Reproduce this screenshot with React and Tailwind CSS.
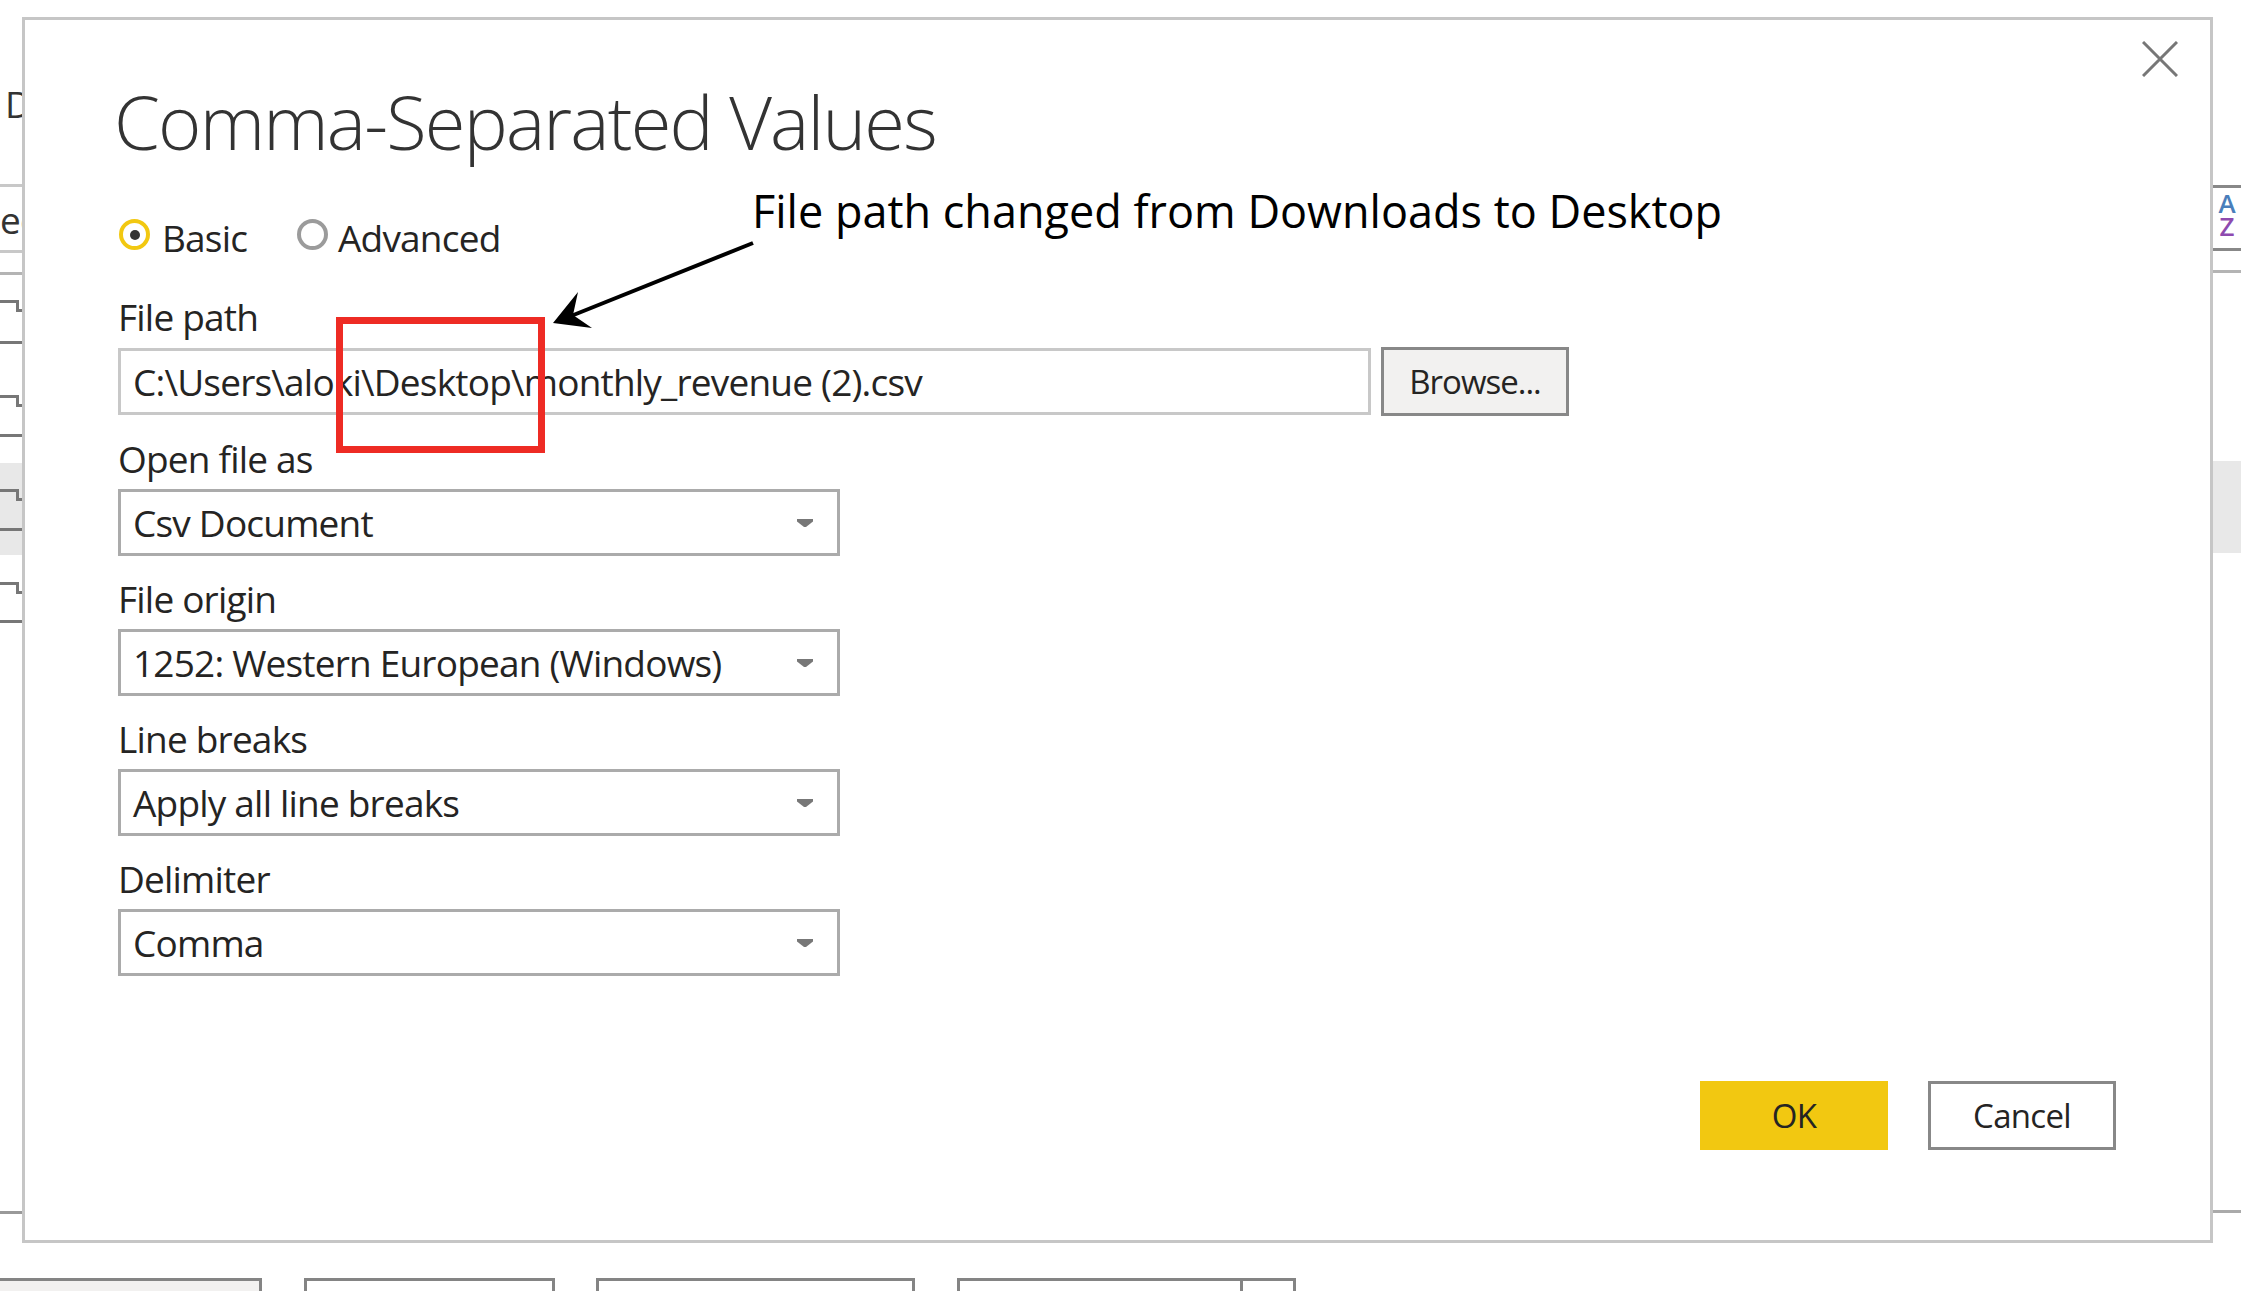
import React from 'react';

const Caret = () => (
  <svg width="16" height="8" viewBox="0 0 16 8" className="shrink-0">
    <path d="M0 0H16V2.5L9 8H7L0 2.5Z" fill="#777" />
  </svg>
);

const Radio = ({ checked }) =>
  checked ? (
    <span className="flex h-[31px] w-[31px] shrink-0 items-center justify-center rounded-full border-4 border-[#f2c811] bg-white">
      <span className="h-[10px] w-[10px] rounded-full bg-[#333]" />
    </span>
  ) : (
    <span className="h-[31px] w-[31px] shrink-0 rounded-full border-4 border-[#9b9b9b] bg-white" />
  );

const Label = ({ children, className = '' }) => (
  <div className={`whitespace-nowrap text-[37px] leading-none tracking-[-0.8px] text-[#252423] ${className}`}>
    {children}
  </div>
);

const Select = ({ value }) => (
  <div className="flex h-[67px] w-[722px] items-center justify-between border-[3px] border-[#ababab] bg-white pl-[12px] pr-[24px]">
    <span className="whitespace-nowrap text-[37px] leading-none tracking-[-0.8px] text-[#252423]">{value}</span>
    <Caret />
  </div>
);

const Field = ({ label, value }) => (
  <>
    <Label className="mt-[24px]">{label}</Label>
    <div className="mt-[12px]">
      <Select value={value} />
    </div>
  </>
);

const Bracket = () => (
  <svg width="22" height="12" viewBox="0 0 22 12" className="block">
    <path d="M0 1.5H17.5V10.5H22" fill="none" stroke="#777" strokeWidth="3" />
  </svg>
);

const Rule = ({ dark }) => <div className={`h-[3px] w-full ${dark ? 'bg-[#777]' : 'bg-[#c8c8c8]'}`} />;

const LeftStrip = () => (
  <div className="flex w-[22px] shrink-0 flex-col overflow-hidden">
    <div className="h-[68px]" />
    <div className="ml-[5px] text-[37px] leading-none text-[#333]">D</div>
    <div className="h-[62px]" />
    <Rule />
    <div className="h-[14px]" />
    <div className="whitespace-nowrap text-[37px] leading-none tracking-[-0.8px] text-[#333]">ect</div>
    <div className="h-[12px]" />
    <Rule />
    <div className="h-[19px]" />
    <div className="h-[3px] bg-[#b4b4b4]" />
    <div className="h-[25px]" />
    <Bracket />
    <div className="h-[29px]" />
    <Rule dark />
    <div className="h-[51px]" />
    <Bracket />
    <div className="h-[27px]" />
    <Rule dark />
    <div className="mt-[26px] flex h-[92px] flex-col bg-[#e8e8e8]">
      <div className="h-[26px]" />
      <Bracket />
      <div className="h-[27px]" />
      <Rule dark />
    </div>
    <div className="h-[27px]" />
    <Bracket />
    <div className="h-[26px]" />
    <Rule dark />
    <div className="h-[588px]" />
    <div className="h-[3px] bg-[#999]" />
  </div>
);

const RightStrip = () => (
  <div className="flex flex-1 flex-col overflow-hidden">
    <div className="h-[168px]" />
    <div className="h-[3px] bg-[#888]" />
    <div className="mt-[4px] flex flex-col items-center font-semibold">
      <span className="block text-[26px] leading-[23px] text-[#4a7ebb]">A</span>
      <span className="block text-[26px] leading-[23px] text-[#8e4aaf]">Z</span>
    </div>
    <div className="h-[10px]" />
    <div className="h-[3px] bg-[#888]" />
    <div className="h-[19px]" />
    <div className="h-[3px] bg-[#b4b4b4]" />
    <div className="h-[188px]" />
    <div className="h-[92px] bg-[#e8e8e8]" />
    <div className="h-[657px]" />
    <div className="h-[3px] bg-[#aaa]" />
  </div>
);

const Dialog = () => (
  <div className="relative flex h-[1226px] w-[2191px] shrink-0 flex-col border-[3px] border-[#c6c6c6] bg-white pl-[93px]">
    <button className="absolute right-[32px] top-[21px] h-[36px] w-[36px]">
      <svg width="36" height="36" viewBox="0 0 36 36">
        <path d="M1 1L35 35M35 1L1 35" stroke="#777" strokeWidth="3" />
      </svg>
    </button>

    <h1 className="-ml-[4px] mt-[65px] whitespace-nowrap text-[74px] font-light leading-none tracking-[-1.8px] text-[#333]">
      Comma-Separated Values
    </h1>

    <div className="mt-[60px] flex h-[37px] items-start">
      <div className="ml-[1px] flex w-[178px] items-start gap-[12px]">
        <Radio checked />
        <Label>Basic</Label>
      </div>
      <div className="flex items-start gap-[10px]">
        <Radio />
        <Label>Advanced</Label>
      </div>
    </div>

    <Label className="mt-[42px]">File path</Label>
    <div className="mt-[12px] flex h-[69px] items-center gap-[10px]">
      <div className="flex h-[67px] w-[1253px] items-center border-[3px] border-[#c8c8c8] pl-[12px]">
        <span className="whitespace-nowrap text-[37px] leading-none tracking-[-0.8px] text-[#252423]">
          C:\Users\aloki\Desktop\monthly_revenue (2).csv
        </span>
      </div>
      <button className="flex h-[69px] w-[188px] items-center justify-center border-[3px] border-[#888] bg-[#f2f1f0] text-[33px] leading-none tracking-[-1px] text-[#252423]">
        Browse...
      </button>
    </div>

    <Field label="Open file as" value="Csv Document" />
    <Field label="File origin" value="1252: Western European (Windows)" />
    <Field label="Line breaks" value="Apply all line breaks" />
    <Field label="Delimiter" value="Comma" />

    <div className="mt-[105px] flex justify-end gap-[40px] pr-[94px]">
      <button className="flex h-[69px] w-[188px] items-center justify-center bg-[#f2c811] text-[33px] leading-none tracking-[-0.7px] text-[#252423]">
        OK
      </button>
      <button className="flex h-[69px] w-[188px] items-center justify-center border-[3px] border-[#888] bg-white text-[33px] leading-none tracking-[-0.7px] text-[#252423]">
        Cancel
      </button>
    </div>
  </div>
);

const Tabs = () => (
  <div className="flex h-[13px]">
    <div className="w-[262px] border-r-[3px] border-t-[3px] border-[#848484] bg-[#f2f1f0]" />
    <div className="ml-[42px] w-[251px] border-x-[3px] border-t-[3px] border-[#848484]" />
    <div className="ml-[41px] w-[319px] border-x-[3px] border-t-[3px] border-[#848484]" />
    <div className="ml-[42px] flex w-[339px] border-x-[3px] border-t-[3px] border-[#848484]">
      <div className="w-[283px] border-r-[3px] border-[#848484]" />
    </div>
  </div>
);

export default function App() {
  return (
    <div className="relative h-[1291px] w-[2241px] overflow-hidden bg-white font-['Open_Sans',sans-serif]">
      <div className="flex flex-col">
        <div className="h-[17px]" />
        <div className="flex">
          <LeftStrip />
          <Dialog />
          <RightStrip />
        </div>
        <div className="h-[35px]" />
        <Tabs />
      </div>

      {/* annotation overlay */}
      <div className="absolute left-[752px] top-[188px] whitespace-nowrap text-[45px] leading-none text-black">
        File path changed from Downloads to Desktop
      </div>
      <div className="absolute left-[336px] top-[317px] h-[136px] w-[209px] border-[7px] border-[#ee2b24]" />
      <svg className="absolute left-[540px] top-[230px]" width="230" height="110" viewBox="0 0 230 110">
        <path d="M213 13L31 86" stroke="#000" strokeWidth="4" fill="none" />
        <path d="M13 93L38 62L33 85L52 98Z" fill="#000" />
      </svg>
    </div>
  );
}
